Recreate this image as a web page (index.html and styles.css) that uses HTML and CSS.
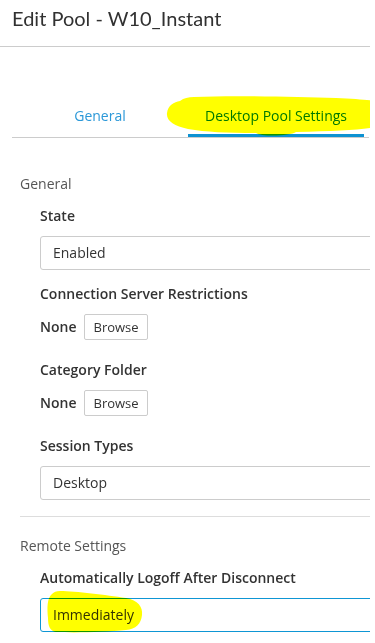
FILE: index.html
```html
<!DOCTYPE html>
<html lang="en">
<head>
    <meta charset="UTF-8">
    <meta name="viewport" content="width=device-width, initial-scale=1.0">
    <title>Edit Pool - W10_Instant</title>
    <link rel="stylesheet" href="styles.css">
</head>
<body>
    <div class="dialog">
        <h1 class="dialog-title">Edit Pool - W10_Instant</h1>

        <div class="tabs">
            <button class="tab-button">General</button>
            <button class="tab-button active">Desktop Pool Settings</button>
        </div>

        <div class="section">
            <div class="section-title">General</div>
            <div class="field">
                <label>State</label>
                <div class="select">Enabled</div>
            </div>
            <div class="field">
                <label>Connection Server Restrictions</label>
                <div class="browse-row">
                    <span class="none">None</span>
                    <button class="browse">Browse</button>
                </div>
            </div>
            <div class="field">
                <label>Category Folder</label>
                <div class="browse-row">
                    <span class="none">None</span>
                    <button class="browse">Browse</button>
                </div>
            </div>
            <div class="field">
                <label>Session Types</label>
                <div class="select">Desktop</div>
            </div>
        </div>

        <div class="section section-remote">
            <div class="section-title">Remote Settings</div>
            <div class="field">
                <label>Automatically Logoff After Disconnect</label>
                <div class="select focused">Immediately</div>
            </div>
        </div>

        <!-- highlighter marks drawn over the screenshot -->
        <svg class="marker marker-tab" width="210" height="44" viewBox="0 0 210 44">
            <path d="M28 2 C70 0 130 2 170 3 C190 4 205 5 210 6 L210 32 C195 35 170 36 130 37 C125 41 95 42 90 38 C60 38 40 37 22 34 C8 31 0 26 1 18 C2 10 8 7 14 6 C18 3 22 2 28 2 Z" fill="#ffff00"/>
        </svg>
        <svg class="marker marker-field" width="100" height="44" viewBox="0 0 100 44">
            <path d="M14 1 C30 1 60 5 80 8 C92 10 97 17 96 25 C95 34 90 39 80 40 C60 42 30 43 10 42 C4 41 2 36 2 28 C1 18 1 8 6 4 C8 2 10 1 14 1 Z" fill="#ffff00"/>
        </svg>
    </div>
</body>
</html>
```

FILE: styles.css
```css
body {
    margin: 0;
    background-color: #ffffff;
    font-family: 'Open Sans', sans-serif;
    font-size: 14px;
    color: #333333;
}
.dialog {
    position: relative;
    width: 370px;
    height: 643px;
    overflow: hidden;
}
.dialog-title {
    margin: 0;
    height: 46px;
    padding: 0 12px;
    border-bottom: 1px solid #cccccc;
    font-family: 'Lato', sans-serif;
    font-size: 20px;
    font-weight: 400;
    line-height: 36px;
    color: #313131;
}
.tabs {
    display: flex;
    margin: 51px 1px 0 12px;
    border-bottom: 1px solid #cccccc;
}
.tab-button {
    flex: 0 0 176px;
    padding: 8px 0;
    background: none;
    border: none;
    border-bottom: 3px solid transparent;
    font-family: 'Open Sans', sans-serif;
    font-size: 14px;
    line-height: 20px;
    color: #2b98d8;
    cursor: pointer;
}
.tab-button.active {
    color: #0079b8;
    border-bottom-color: #0e92d2;
}
.section {
    padding: 36px 0 16px 20px;
}
.section-remote {
    margin-left: 20px;
    padding: 19px 0 0 0;
    border-top: 1px solid #dddddd;
}
.section-title {
    line-height: 20px;
    color: #565656;
    margin-bottom: 12px;
}
.field {
    padding-left: 20px;
    margin-bottom: 14px;
}
.field:last-child {
    margin-bottom: 0;
}
.field label {
    display: block;
    font-weight: 600;
    line-height: 20px;
    margin-bottom: 10px;
    color: #333333;
}
.select {
    width: 340px;
    height: 32px;
    padding-left: 12px;
    border: 1px solid #cccccc;
    border-radius: 3px;
    line-height: 32px;
    color: #333333;
}
.select.focused {
    border-color: #0e96d4;
}
.browse-row {
    display: flex;
    align-items: center;
    gap: 8px;
    margin-top: 1px;
    margin-bottom: 20px;
}
.none {
    font-weight: 600;
    line-height: 20px;
}
.browse {
    height: 26px;
    padding: 0 8px;
    background-color: #ffffff;
    border: 1px solid #cccccc;
    border-radius: 2px;
    font-family: 'Open Sans', sans-serif;
    font-size: 13px;
    color: #333333;
}
.marker {
    position: absolute;
    mix-blend-mode: multiply;
}
.marker-tab {
    left: 166px;
    top: 95px;
}
.marker-field {
    left: 46px;
    top: 590px;
}
```
